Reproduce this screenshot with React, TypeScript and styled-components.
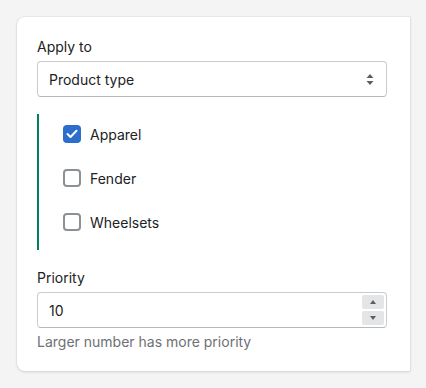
import React, { useState } from 'react';
import styled, { createGlobalStyle } from 'styled-components';

const GlobalStyle = createGlobalStyle`
  body {
    margin: 0;
    background: #f4f4f4;
    font-family: Inter, "Noto Sans", sans-serif;
    color: #202223;
  }
`;

const Page = styled.div`
  padding: 17px 16px 17px 17px;
`;

const Card = styled.div`
  background: #ffffff;
  border-radius: 8px 0 0 8px;
  box-shadow: 0 0 0 1px rgba(63, 63, 68, 0.05), 0 1px 3px rgba(63, 63, 68, 0.15);
  padding: 20px 23px 19px 20px;
`;

const Label = styled.div<{ $top?: number }>`
  font-size: 14px;
  line-height: 20px;
  margin-top: ${(p) => p.$top || 0}px;
  margin-bottom: 4px;
`;

const SelectBox = styled.div`
  height: 36px;
  box-sizing: border-box;
  border: 1px solid #c9cccf;
  border-bottom-color: #b5b9bd;
  border-radius: 4px;
  display: flex;
  align-items: center;
  justify-content: space-between;
  padding: 0 12px 0 11px;
  font-size: 14px;
`;

const ChoiceList = styled.div`
  margin-top: 17px;
  border-left: 2px solid #008060;
  padding: 0 0 8px 24px;
  display: flex;
  flex-direction: column;
  gap: 4px;
`;

const Choice = styled.label`
  height: 40px;
  display: flex;
  align-items: center;
  gap: 9px;
  font-size: 14px;
  cursor: pointer;
`;

const Box = styled.span<{ $checked: boolean }>`
  width: 18px;
  height: 18px;
  box-sizing: border-box;
  border-radius: 4px;
  border: ${(p) => (p.$checked ? 'none' : '2px solid #8c9196')};
  background: ${(p) => (p.$checked ? '#2c6ecb' : '#fff')};
  display: flex;
  align-items: center;
  justify-content: center;
`;

const NumberField = styled.div`
  height: 36px;
  box-sizing: border-box;
  border: 1px solid #c9cccf;
  border-bottom-color: #b5b9bd;
  border-radius: 4px;
  display: flex;
  align-items: center;
  justify-content: space-between;
  padding: 0 2px 0 11px;
  font-size: 14px;
`;

const Spinner = styled.div`
  display: flex;
  flex-direction: column;
  gap: 2px;
`;

const SpinButton = styled.div`
  width: 22px;
  height: 14px;
  background: #e4e5e7;
  border-radius: 2px;
  display: flex;
  align-items: center;
  justify-content: center;
`;

const Help = styled.div`
  margin-top: 4px;
  font-size: 14px;
  line-height: 20px;
  color: #6d7175;
`;

const options = ['Apparel', 'Fender', 'Wheelsets'];

export default function App() {
  const [checked, setChecked] = useState<string[]>(['Apparel']);
  const toggle = (o: string) =>
    setChecked((c) => (c.includes(o) ? c.filter((x) => x !== o) : [...c, o]));

  return (
    <Page>
      <GlobalStyle />
      <Card>
        <Label>Apply to</Label>
        <SelectBox>
          <span>Product type</span>
          <svg width="8" height="11" viewBox="0 0 8 11">
            <path d="M4 0 L7.5 4 H0.5 Z" fill="#5c5f62" />
            <path d="M4 11 L7.5 7 H0.5 Z" fill="#5c5f62" />
          </svg>
        </SelectBox>
        <ChoiceList>
          {options.map((o) => (
            <Choice key={o} onClick={() => toggle(o)}>
              <Box $checked={checked.includes(o)}>
                {checked.includes(o) && (
                  <svg width="12" height="10" viewBox="0 0 12 10">
                    <path d="M1.5 5 L4.5 8 L10.5 1.8" stroke="#fff" strokeWidth="2" fill="none" strokeLinecap="round" strokeLinejoin="round" />
                  </svg>
                )}
              </Box>
              {o}
            </Choice>
          ))}
        </ChoiceList>
        <Label $top={18}>Priority</Label>
        <NumberField>
          <span>10</span>
          <Spinner>
            <SpinButton>
              <svg width="6" height="4" viewBox="0 0 6 4">
                <path d="M3 0 L6 4 H0 Z" fill="#5c5f62" />
              </svg>
            </SpinButton>
            <SpinButton>
              <svg width="6" height="4" viewBox="0 0 6 4">
                <path d="M3 4 L6 0 H0 Z" fill="#5c5f62" />
              </svg>
            </SpinButton>
          </Spinner>
        </NumberField>
        <Help>Larger number has more priority</Help>
      </Card>
    </Page>
  );
}
